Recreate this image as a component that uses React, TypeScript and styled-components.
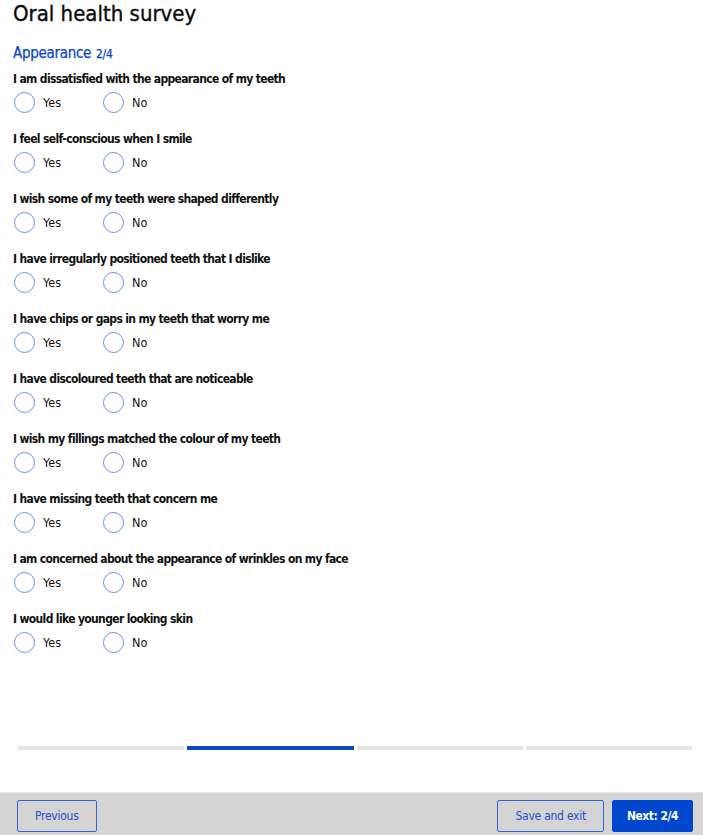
import { useState } from "react";
import styled, { createGlobalStyle } from "styled-components";

const GlobalStyle = createGlobalStyle`
    html, body {
        margin: 0;
        padding: 0;
        background: #fff;
    }
    body {
        font-family: "DejaVu Sans Condensed", "DejaVu Sans", sans-serif;
        color: #111;
    }
`;

const Page = styled.div`
    display: flex;
    flex-direction: column;
    min-height: 835px;
`;

const Main = styled.main`
    flex: 1;
    padding: 0 13px;
`;

const Title = styled.h1`
    margin: 0;
    font-size: 22px;
    line-height: 28px;
    font-weight: 400;
    -webkit-text-stroke: 0.35px #0b0b0b;
    color: #0b0b0b;
`;

const Section = styled.h2`
    margin: 15px 0 6px;
    font-size: 15px;
    line-height: 20px;
    font-weight: 400;
    letter-spacing: -0.3px;
    -webkit-text-stroke: 0.25px #0a47d1;
    color: #0a47d1;
`;

const Step = styled.span`
    font-size: 12px;
    margin-left: 1px;
`;

const Block = styled.fieldset`
    border: 0;
    margin: 0 0 17px;
    padding: 0;
`;

const Label = styled.legend`
    padding: 0;
    font-size: 12px;
    line-height: 18px;
    font-weight: 700;
    letter-spacing: -0.65px;
    color: #111;
`;

const Options = styled.div`
    display: flex;
    margin-top: 3px;
    height: 22px;
`;

const Option = styled.label`
    display: flex;
    align-items: center;
    width: 89px;
    font-size: 12.5px;
    cursor: pointer;
`;

const Circle = styled.span<{ $checked: boolean }>`
    box-sizing: border-box;
    width: 21px;
    height: 21px;
    margin: 0 8px 0 1px;
    border-radius: 50%;
    border: 1.6px solid #6c91e4;
    background: ${p => (p.$checked ? "radial-gradient(circle, #0a47d1 0 5px, #fff 5.5px)" : "#fff")};
`;

const Hidden = styled.input`
    position: absolute;
    opacity: 0;
    pointer-events: none;
`;

const Progress = styled.div`
    display: grid;
    grid-template-columns: repeat(4, 1fr);
    gap: 3px;
    padding: 0 11px 0 18px;
    margin-bottom: 42px;
`;

const Segment = styled.div<{ $active: boolean }>`
    height: 4px;
    background: ${p => (p.$active ? "#0a47d1" : "#e6e6e6")};
`;

const Footer = styled.footer`
    display: flex;
    align-items: flex-start;
    gap: 8px;
    height: 43px;
    padding: 7px 10px 0 17px;
    background: #d4d4d4;
    border-top: 1px solid #e2e2e2;
    box-sizing: border-box;
    overflow: hidden;
`;

const Button = styled.button<{ $primary?: boolean }>`
    flex-shrink: 0;
    height: 32px;
    padding: 0 ${p => (p.$primary ? 14 : 17)}px;
    border-radius: 2px;
    font-family: inherit;
    font-size: 12px;
    letter-spacing: ${p => (p.$primary ? -0.5 : -0.25)}px;
    cursor: pointer;
    border: 1px solid ${p => (p.$primary ? "#0046cf" : "#3464d6")};
    background: ${p => (p.$primary ? "#0046cf" : "transparent")};
    color: ${p => (p.$primary ? "#fff" : "#1f50c9")};
    font-weight: ${p => (p.$primary ? 700 : 400)};
`;

const Spacer = styled.div`
    flex: 1;
`;

const questions = [
    "I am dissatisfied with the appearance of my teeth",
    "I feel self-conscious when I smile",
    "I wish some of my teeth were shaped differently",
    "I have irregularly positioned teeth that I dislike",
    "I have chips or gaps in my teeth that worry me",
    "I have discoloured teeth that are noticeable",
    "I wish my fillings matched the colour of my teeth",
    "I have missing teeth that concern me",
    "I am concerned about the appearance of wrinkles on my face",
    "I would like younger looking skin",
];

const App = () => {
    const [answers, setAnswers] = useState<Record<number, string>>({});

    return (
        <Page>
            <GlobalStyle />
            <Main>
                <Title>Oral health survey</Title>
                <Section>
                    Appearance <Step>2/4</Step>
                </Section>
                {questions.map((q, i) => (
                    <Block key={i}>
                        <Label>{q}</Label>
                        <Options>
                            {["Yes", "No"].map(opt => (
                                <Option key={opt}>
                                    <Hidden
                                        type="radio"
                                        name={`q${i}`}
                                        checked={answers[i] === opt}
                                        onChange={() => setAnswers({ ...answers, [i]: opt })}
                                    />
                                    <Circle $checked={answers[i] === opt} />
                                    {opt}
                                </Option>
                            ))}
                        </Options>
                    </Block>
                ))}
            </Main>
            <Progress>
                {[1, 2, 3, 4].map(n => (
                    <Segment key={n} $active={n === 2} />
                ))}
            </Progress>
            <Footer>
                <Button>Previous</Button>
                <Spacer />
                <Button>Save and exit</Button>
                <Button $primary>Next: 2/4</Button>
            </Footer>
        </Page>
    );
};

export default App;
